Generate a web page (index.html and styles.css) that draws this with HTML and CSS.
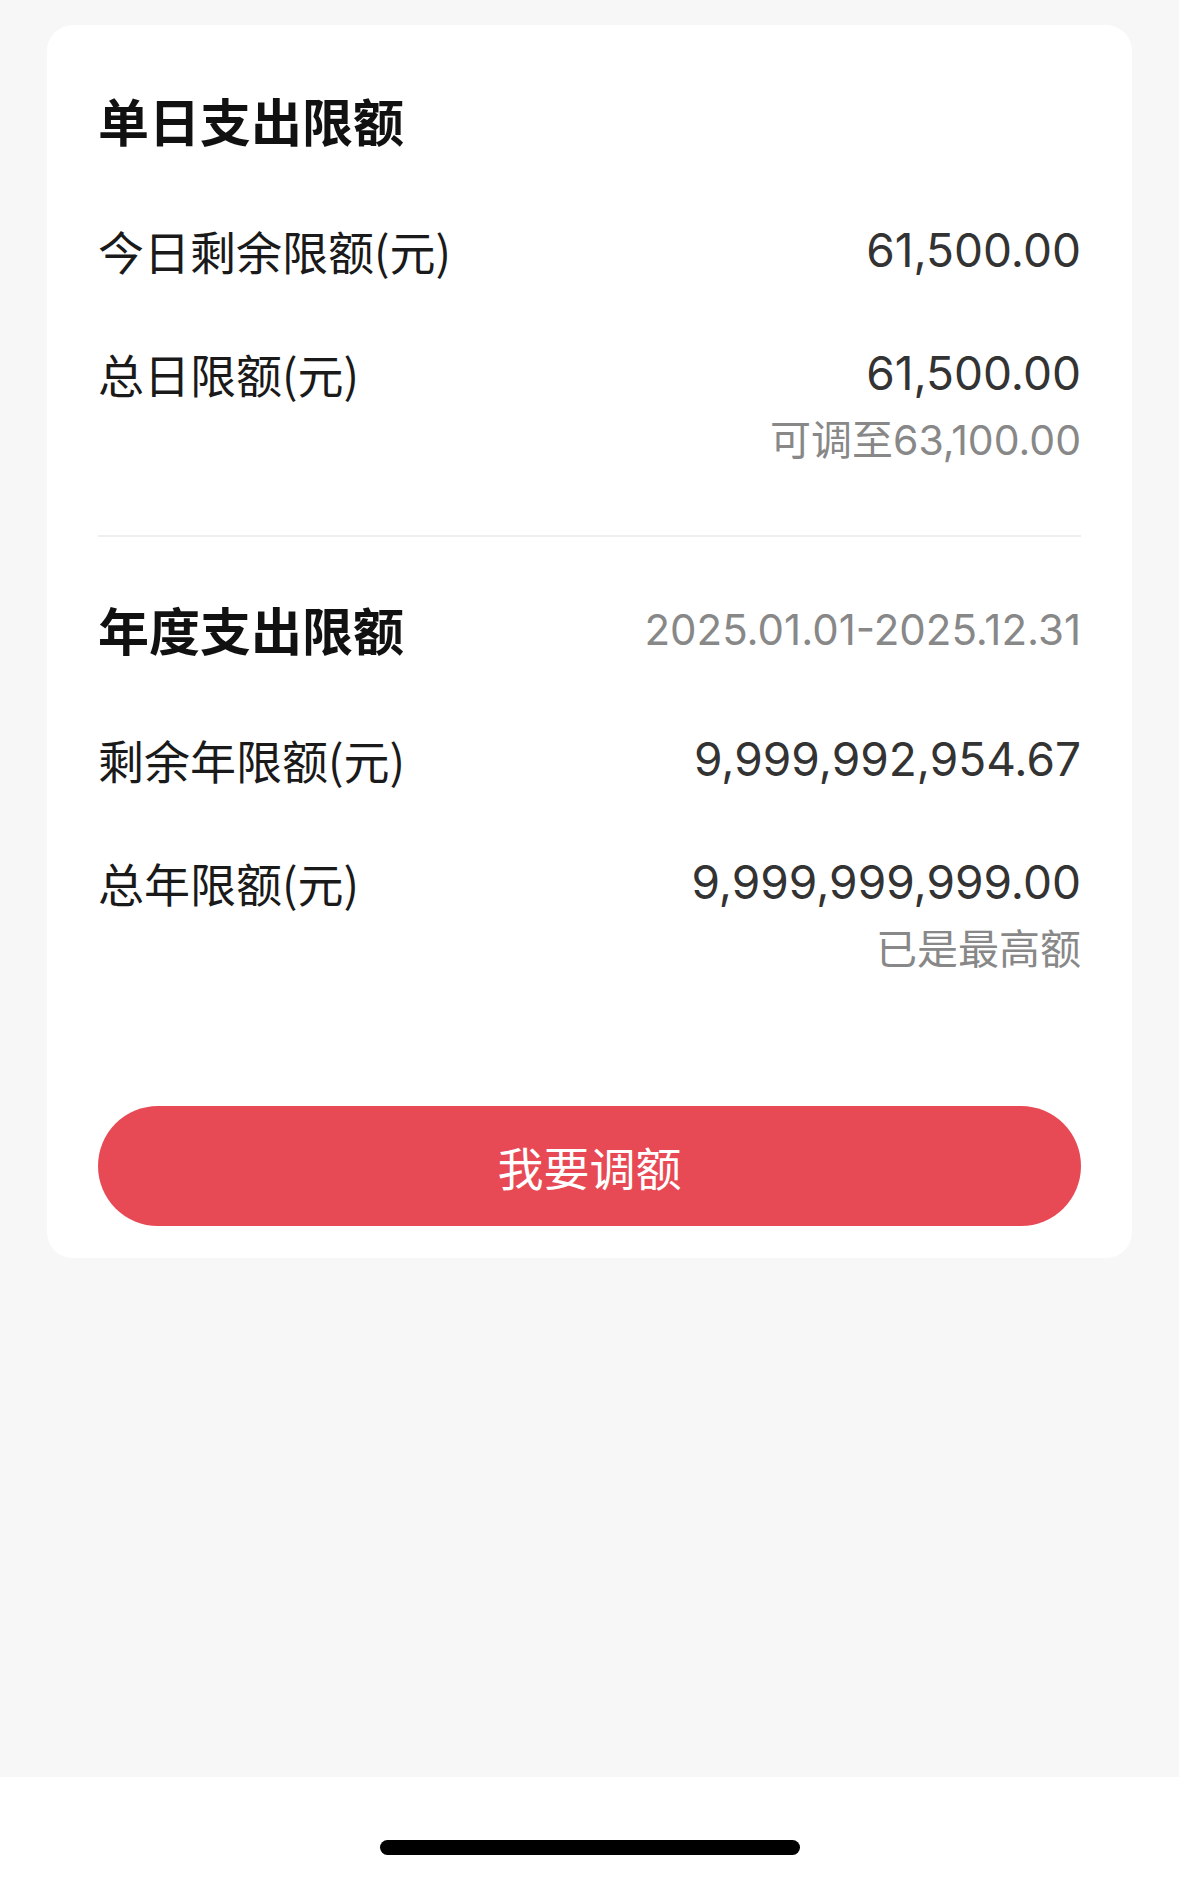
FILE: index.html
```html
<!DOCTYPE html>
<html lang="zh-CN">
<head>
  <meta charset="UTF-8">
  <title>支出限额</title>
  <link rel="stylesheet" href="styles.css">
</head>
<body>
  <main class="page">
    <div class="card">
      <div class="section-head">
        <h2>单日支出限额</h2>
      </div>
      <div class="row">
        <span class="label">今日剩余限额(元)</span>
        <div class="amount">
          <span class="value">61,500.00</span>
        </div>
      </div>
      <div class="row">
        <span class="label">总日限额(元)</span>
        <div class="amount">
          <span class="value">61,500.00</span>
          <span class="hint">可调至63,100.00</span>
        </div>
      </div>

      <hr class="divider">

      <div class="section-head">
        <h2>年度支出限额</h2>
        <span class="period">2025.01.01-2025.12.31</span>
      </div>
      <div class="row">
        <span class="label">剩余年限额(元)</span>
        <div class="amount">
          <span class="value">9,999,992,954.67</span>
        </div>
      </div>
      <div class="row">
        <span class="label">总年限额(元)</span>
        <div class="amount">
          <span class="value">9,999,999,999.00</span>
          <span class="hint">已是最高额</span>
        </div>
      </div>

      <button class="adjust-btn">我要调额</button>
    </div>
  </main>

  <div class="home-bar">
    <span class="indicator"></span>
  </div>
</body>
</html>
```

FILE: styles.css
```css
body {
  margin: 0;
  padding: 0;
  background: #f7f7f7;
  font-family: "Inter", "Noto Sans CJK SC", sans-serif;
  min-height: 100vh;
  display: flex;
  flex-direction: column;
}
.page {
  flex: 1;
  padding: 25px 47px 0;
}
.card {
  background: #fff;
  border-radius: 26px;
  padding: 64px 51px 32px;
  display: flex;
  flex-direction: column;
}
.section-head {
  display: flex;
  justify-content: space-between;
  align-items: center;
  margin-bottom: 4px;
}
.section-head h2 {
  margin: 0;
  font-family: "Noto Sans CJK SC", sans-serif;
  font-size: 51px;
  line-height: 62px;
  font-weight: bold;
  color: #111;
}
.period {
  font-size: 42px;
  color: #888;
}
.row {
  display: flex;
  justify-content: space-between;
  align-items: flex-start;
  margin-top: 67px;
}
.label {
  font-family: "Noto Sans CJK SC", sans-serif;
  font-size: 46px;
  line-height: 56px;
  color: #1a1a1a;
}
.amount {
  display: flex;
  flex-direction: column;
  align-items: flex-end;
}
.value {
  font-size: 46px;
  line-height: 56px;
  color: #333;
}
.hint {
  margin-top: 14px;
  font-size: 41px;
  line-height: 50px;
  color: #888;
}
.divider {
  border: none;
  height: 2px;
  background: #efefef;
  margin: 70px 0 61px;
}
.adjust-btn {
  margin-top: 132px;
  height: 120px;
  border: none;
  border-radius: 60px;
  background: #e84a55;
  color: #fff;
  font-family: "Noto Sans CJK SC", sans-serif;
  font-size: 46px;
}
.home-bar {
  height: 102px;
  background: #fff;
  display: flex;
  justify-content: center;
}
.indicator {
  margin-top: 63px;
  width: 420px;
  height: 15px;
  border-radius: 8px;
  background: #000;
}
```
